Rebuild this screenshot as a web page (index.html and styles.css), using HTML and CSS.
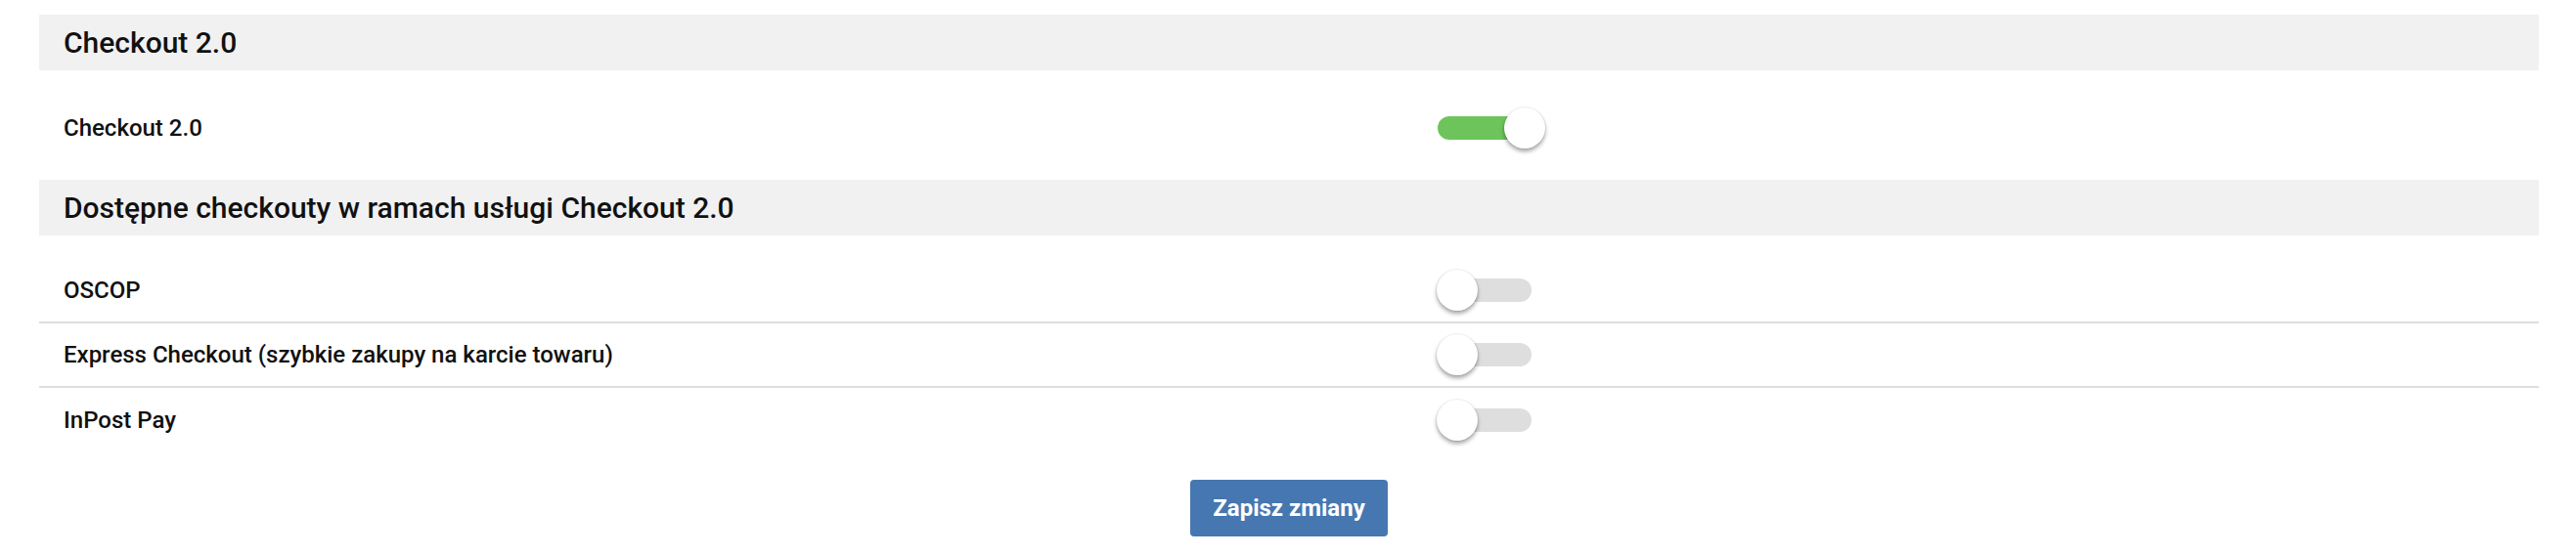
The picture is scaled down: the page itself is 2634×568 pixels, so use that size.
FILE: index.html
```html
<!DOCTYPE html>
<html lang="pl">
<head>
    <meta charset="UTF-8">
    <meta name="viewport" content="width=device-width, initial-scale=1.0">
    <title>Checkout 2.0</title>
    <link rel="stylesheet" href="styles.css">
</head>
<body>
    <div class="settings">
        <h2 class="section-title">Checkout 2.0</h2>
        <div class="options first">
            <div class="option-row">
                <span class="option-label">Checkout 2.0</span>
                <label class="switch on"><span class="knob"></span></label>
            </div>
        </div>

        <h2 class="section-title">Dostępne checkouty w ramach usługi Checkout 2.0</h2>
        <div class="options">
            <div class="option-row">
                <span class="option-label">OSCOP</span>
                <label class="switch"><span class="knob"></span></label>
            </div>
            <div class="option-row">
                <span class="option-label">Express Checkout (szybkie zakupy na karcie towaru)</span>
                <label class="switch"><span class="knob"></span></label>
            </div>
            <div class="option-row">
                <span class="option-label">InPost Pay</span>
                <label class="switch"><span class="knob"></span></label>
            </div>
        </div>

        <div class="actions">
            <button type="button" class="save-btn">Zapisz zmiany</button>
        </div>
    </div>
</body>
</html>
```

FILE: styles.css
```css
body {
    margin: 0;
    font-family: Roboto, "Liberation Sans", sans-serif;
    color: #111;
    background: #fff;
}
.settings {
    margin: 15px 38px 0 40px;
}
.section-title {
    margin: 0;
    height: 57px;
    display: flex;
    align-items: center;
    padding-left: 25px;
    background-color: #f1f1f1;
    font-size: 30px;
    font-weight: 500;
}
.options {
    margin-top: 24px;
}
.options.first {
    margin-top: 26px;
    margin-bottom: 20px;
}
.option-row {
    display: grid;
    grid-template-columns: 1405px 1fr;
    align-items: center;
    height: 64px;
    padding-left: 25px;
    border-bottom: 2px solid #dedede;
}
.option-row:last-child {
    height: 66px;
    border-bottom: none;
}
.option-label {
    font-size: 24px;
    font-weight: 500;
}
.switch {
    position: relative;
    display: block;
    width: 96px;
    height: 24px;
    border-radius: 12px;
    background-color: #dedede;
    cursor: pointer;
}
.switch.on {
    background-color: #6cc45b;
}
.knob {
    position: absolute;
    top: -9px;
    left: -1px;
    width: 42px;
    height: 42px;
    border-radius: 50%;
    background: #fff;
    box-shadow: 0 0 0 1px rgba(0,0,0,0.05), 0 3px 4px rgba(0,0,0,0.35);
}
.switch.on .knob {
    left: 68px;
}
.actions {
    display: flex;
    justify-content: center;
    padding-top: 28px;
}
.save-btn {
    width: 202px;
    height: 58px;
    background-color: #4677b0;
    color: #fff;
    border: none;
    border-radius: 4px;
    font-family: Roboto, "Liberation Sans", sans-serif;
    font-size: 24px;
    font-weight: 700;
    cursor: pointer;
}
```
